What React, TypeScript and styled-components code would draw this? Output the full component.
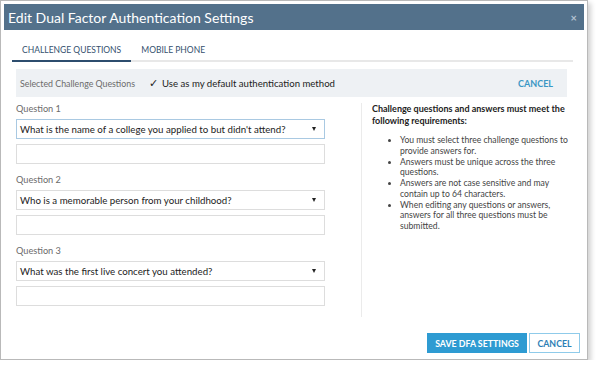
import React from 'react';
import styled, { createGlobalStyle } from 'styled-components';

const Global = createGlobalStyle`
  html, body { margin: 0; padding: 0; background: #fff; }
  body { font-family: Lato, "Open Sans", sans-serif; }
  * { box-sizing: border-box; }
`;

const Dialog = styled.div`
  width: 588px;
  height: 360px;
  border: 1px solid #b9b9b9;
  padding: 3px;
  box-shadow: 3px 3px 5px rgba(0, 0, 0, 0.18);
  display: flex;
  flex-direction: column;
  background: #fff;
`;

const Header = styled.div`
  height: 26px;
  background: #53718b;
  color: #fff;
  display: flex;
  align-items: center;
  justify-content: space-between;
  padding: 0 7px 0 4px;
  font-size: 14px;
`;

const Close = styled.span`
  color: #b3c2d1;
  font-size: 11px;
  font-weight: bold;
  line-height: 1;
`;

const Tabs = styled.div`
  display: flex;
  height: 32px;
  margin: 0 11px 0 8px;
  border-bottom: 2px solid #e8e8e8;
  align-items: stretch;
`;

const Tab = styled.div<{ $active?: boolean }>`
  display: flex;
  align-items: flex-end;
  padding: 0 10px 5px;
  font-size: 8.5px;
  text-transform: uppercase;
  color: #34506e;
  margin-bottom: -2px;
  border-bottom: 2px solid ${(p) => (p.$active ? '#2d4d6e' : 'transparent')};
`;

const Bar = styled.div`
  display: flex;
  align-items: center;
  height: 28px;
  margin: 7px 17px 0 12px;
  padding: 0 14px 0 4px;
  background: #eef1f4;
`;

const BarLabel = styled.span`
  font-size: 8.8px;
  color: #6b6b6b;
`;

const Check = styled.span`
  margin-left: 14px;
  font-size: 11px;
  color: #222;
  width: 13px;
`;

const CheckLabel = styled.span`
  font-size: 9.6px;
  color: #222;
`;

const LinkButton = styled.span`
  margin-left: auto;
  font-size: 9px;
  font-weight: bold;
  color: #3a97c4;
`;

const Main = styled.div`
  display: flex;
  margin: 4px 8px 0 12px;
`;

const LeftCol = styled.div`
  width: 309px;
  display: flex;
  flex-direction: column;
  gap: 8px;
`;

const Group = styled.div`
  display: flex;
  flex-direction: column;
`;

const Label = styled.div`
  font-size: 9.2px;
  line-height: 15px;
  color: #6b6b6b;
  margin-bottom: 3px;
`;

const Select = styled.div<{ $focused?: boolean }>`
  height: 20px;
  border: 1px solid ${(p) => (p.$focused ? '#a9c9e2' : '#dddddd')};
  display: flex;
  align-items: center;
  justify-content: space-between;
  padding: 0 8px 0 3px;
  font-size: 9.7px;
  color: #222;
`;

const Arrow = styled.span`
  width: 0;
  height: 0;
  border-left: 2.5px solid transparent;
  border-right: 2.5px solid transparent;
  border-top: 4px solid #222;
`;

const Input = styled.div`
  height: 20px;
  margin-top: 5px;
  border: 1px solid #dddddd;
`;

const RightCol = styled.div`
  margin: 2px 0 0 36px;
  height: 214px;
  border-left: 1px solid #ebebeb;
  padding-left: 10px;
  flex: 1;
`;

const Heading = styled.div`
  font-size: 9px;
  line-height: 12px;
  font-weight: bold;
  color: #222;
  max-width: 200px;
`;

const List = styled.ul`
  margin: 8px 0 0;
  padding-left: 28px;
  max-width: 204px;
`;

const Item = styled.li`
  font-size: 8.6px;
  line-height: 10.75px;
  color: #444;
`;

const Footer = styled.div`
  margin-top: auto;
  display: flex;
  justify-content: flex-end;
  gap: 2px;
  padding: 0 4px 3px 0;
`;

const Button = styled.div<{ $primary?: boolean }>`
  width: ${(p) => (p.$primary ? '100px' : '51px')};
  height: 20px;
  display: flex;
  align-items: center;
  justify-content: center;
  font-size: 8.8px;
  font-weight: bold;
  text-transform: uppercase;
  background: ${(p) => (p.$primary ? '#2e9bd2' : '#fff')};
  color: ${(p) => (p.$primary ? '#fff' : '#2d80b5')};
  border: 1px solid ${(p) => (p.$primary ? '#2e9bd2' : '#8fcbea')};
`;

const questions = [
  { label: 'Question 1', value: "What is the name of a college you applied to but didn't attend?", focused: true },
  { label: 'Question 2', value: 'Who is a memorable person from your childhood?' },
  { label: 'Question 3', value: 'What was the first live concert you attended?' },
];

export default function App() {
  return (
    <>
      <Global />
      <Dialog>
        <Header>
          <span>Edit Dual Factor Authentication Settings</span>
          <Close>×</Close>
        </Header>
        <Tabs>
          <Tab $active>Challenge Questions</Tab>
          <Tab>Mobile Phone</Tab>
        </Tabs>
        <Bar>
          <BarLabel>Selected Challenge Questions</BarLabel>
          <Check>✓</Check>
          <CheckLabel>Use as my default authentication method</CheckLabel>
          <LinkButton>CANCEL</LinkButton>
        </Bar>
        <Main>
          <LeftCol>
            {questions.map((q) => (
              <Group key={q.label}>
                <Label>{q.label}</Label>
                <Select $focused={q.focused}>
                  <span>{q.value}</span>
                  <Arrow />
                </Select>
                <Input />
              </Group>
            ))}
          </LeftCol>
          <RightCol>
            <Heading>Challenge questions and answers must meet the following requirements:</Heading>
            <List>
              <Item>You must select three challenge questions to provide answers for.</Item>
              <Item>Answers must be unique across the three questions.</Item>
              <Item>Answers are not case sensitive and may contain up to 64 characters.</Item>
              <Item>When editing any questions or answers, answers for all three questions must be submitted.</Item>
            </List>
          </RightCol>
        </Main>
        <Footer>
          <Button $primary>Save DFA Settings</Button>
          <Button>Cancel</Button>
        </Footer>
      </Dialog>
    </>
  );
}
